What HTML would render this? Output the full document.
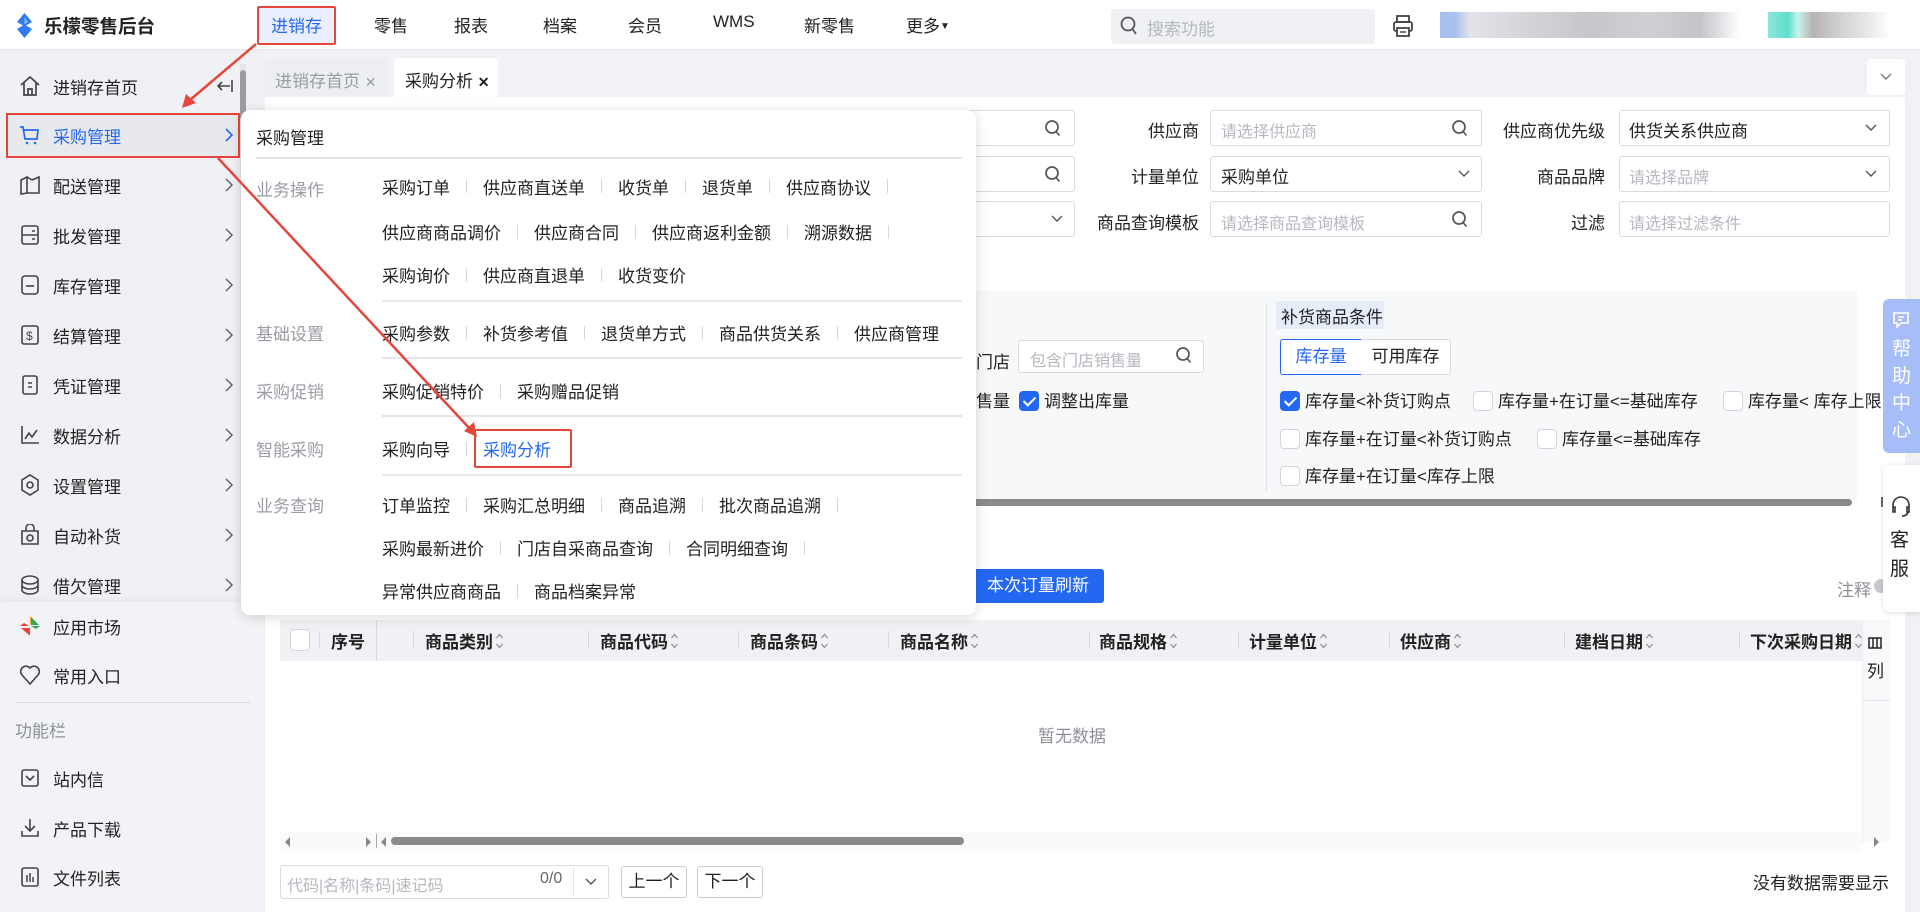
<!DOCTYPE html>
<html><head><meta charset="utf-8">
<style>
*{box-sizing:border-box;margin:0;padding:0}
body{width:1920px;height:912px;overflow:hidden;position:relative;background:#f0f2f5;font-family:"Liberation Sans","Noto Sans CJK SC",sans-serif;color:#222;font-size:17px}
.a{position:absolute;white-space:nowrap}
.hdr{left:0;top:0;width:1920px;height:50px;background:#fff;border-bottom:1px solid #e3e5ea}
.nav{top:12px;font-size:17px;color:#222}
.side{left:0;top:51px;width:264px;height:861px;background:#f0f1f4}
.si{left:0;width:264px;height:50px;display:flex;align-items:center}
.si svg{margin-left:19px;margin-right:12px;flex:none}
.si .chev{position:absolute;left:205px;top:17px}
.inp{background:#fff;border:1px solid #d9dbe0;border-radius:3px;height:36px}
.ph{color:#b5b8bf;font-size:16px}
.lbl{font-size:17px;color:#222}
.pop{left:241px;top:110px;width:735px;height:505px;background:#fff;border-radius:9px;box-shadow:0 2px 12px rgba(0,0,0,.15)}
.row{position:absolute;left:141px;display:flex;align-items:center;font-size:17px;color:#222}
.sep{display:inline-block;width:1px;height:14px;background:#d5d7dc;margin:0 16px}
.sl{position:absolute;left:15px;font-size:17px;color:#9a9da4}
.dv{position:absolute;left:141px;width:580px;height:1.5px;background:#e6e7ea}
.cb{display:inline-block;width:20px;height:20px;border:1px solid #d3d6dc;border-radius:4px;background:#fff;vertical-align:-4px;margin-right:5px}
.cbk{background:#2468f2;border-color:#2468f2;position:relative}
.cbk:after{content:"";position:absolute;left:6px;top:2px;width:5px;height:10px;border:solid #fff;border-width:0 2px 2px 0;transform:rotate(45deg)}
.th{top:620px;height:41px;font-size:17px;font-weight:bold;color:#222;display:flex;align-items:center}
.srt{display:inline-block;width:9px;height:18px;margin-left:2px;vertical-align:middle}
.thd{top:631px;width:1px;height:18px;background:#d5d7dc}
</style></head><body>

<div class="a hdr"></div>
<svg class="a" style="left:16px;top:13px" width="17" height="25" viewBox="0 0 17 25"><path d="M8.5 0 L16 9 L10 12.5 L16 16 L8.5 25 L1 16 L7 12.5 L1 9 Z" fill="#2f7bf5"/><path d="M8.5 4 L12 9 L8.5 11 Z" fill="#8fc0ff"/></svg>
<div class="a" style="left:44px;top:13px;font-size:18.5px;font-weight:bold;color:#222">乐檬零售后台</div>
<div class="a" style="left:257px;top:6px;width:79px;height:39px;border:2.5px solid #e5463b;border-radius:2px;background:#e9efff"></div>
<div class="a nav" style="left:271px;color:#2468f2">进销存</div>
<div class="a nav" style="left:374px">零售</div>
<div class="a nav" style="left:454px">报表</div>
<div class="a nav" style="left:543px">档案</div>
<div class="a nav" style="left:628px">会员</div>
<div class="a nav" style="left:713px">WMS</div>
<div class="a nav" style="left:804px">新零售</div>
<div class="a nav" style="left:906px">更多<span style="font-size:10px;vertical-align:3px">▼</span></div>
<div class="a" style="left:1111px;top:9px;width:264px;height:35px;background:#f0f1f4;border-radius:4px"></div>
<svg class="a" style="left:1120px;top:16px" width="18" height="20" viewBox="0 0 18 20"><circle cx="8" cy="8" r="6.5" fill="none" stroke="#555" stroke-width="1.8"/><path d="M12.5 13 L16 18" stroke="#555" stroke-width="1.8"/></svg>
<div class="a ph" style="left:1147px;top:15px;font-size:17px">搜索功能</div>
<svg class="a" style="left:1392px;top:14px" width="22" height="24" viewBox="0 0 22 24"><rect x="5" y="2" width="12" height="6" fill="none" stroke="#444" stroke-width="1.8"/><rect x="2" y="8" width="18" height="9" rx="2" fill="none" stroke="#444" stroke-width="1.8"/><rect x="5" y="14" width="12" height="8" fill="#fff" stroke="#444" stroke-width="1.8"/><line x1="8" y1="18" x2="14" y2="18" stroke="#444" stroke-width="1.5"/></svg>
<div class="a" style="left:1440px;top:12px;width:300px;height:26px;background:linear-gradient(90deg,#a8c0f0 0,#a8c0f0 15px,#e2e4ea 30px,#d4d4d8 90px,#c6c6cb 150px,#d0d0d4 210px,#c2c4c8 260px,#fff 300px)"></div>
<div class="a" style="left:1768px;top:12px;width:122px;height:26px;background:linear-gradient(90deg,#8de5d8 0,#5ee0cf 20px,#c8f2ec 30px,#b6b4b4 45px,#cfcfd2 70px,#e8e8ea 100px,#fff 122px)"></div>

<div class="a side"></div>
<div class="a" style="left:240px;top:64px;width:6px;height:520px;background:#e4e6ea"></div>
<div class="a" style="left:240px;top:70px;width:6px;height:50px;background:#9a9ca2;border-radius:3px"></div>
<div class="a" style="left:0;top:602px;width:264px;height:310px;background:#f2f3f6;box-shadow:0 -3px 6px rgba(0,0,0,.04)"></div>

<div class="a si" style="top:61px"><svg width="22" height="22" viewBox="0 0 22 22"><path d="M2 10 L11 2 L20 10 M5 8 V20 H17 V8 M9 20 V14 H13 V20" fill="none" stroke="#444" stroke-width="1.7"/></svg>进销存首页</div>
<svg class="a" style="left:216px;top:78px" width="18" height="16" viewBox="0 0 18 16"><path d="M2 8 H14 M6 4 L2 8 L6 12 M16 2 V14" fill="none" stroke="#444" stroke-width="1.6"/></svg>

<div class="a" style="left:6px;top:113px;width:234px;height:45px;background:#e7e9ee;border:2.5px solid #e5463b"></div>
<div class="a si" style="top:110px;color:#2468f2"><svg width="22" height="22" viewBox="0 0 22 22"><path d="M1 3 H4 L6 15 H18 L19 6 H5" fill="none" stroke="#2468f2" stroke-width="1.7"/><circle cx="8" cy="19" r="1.3" fill="#2468f2"/><circle cx="16" cy="19" r="1.3" fill="#2468f2"/></svg>采购管理<svg class="chev" width="10" height="16" viewBox="0 0 10 16"><path d="M2 2 L8 8 L2 14" fill="none" stroke="#2468f2" stroke-width="1.6"/></svg></div>

<div class="a si" style="top:160px"><svg width="22" height="22" viewBox="0 0 22 22"><path d="M2 6 L8 3 V19 L2 20 Z M8 3 L13 6 M13 6 L20 3 V19 L8 19" fill="none" stroke="#444" stroke-width="1.6"/></svg>配送管理<svg class="chev" width="10" height="16" viewBox="0 0 10 16"><path d="M2 2 L8 8 L2 14" fill="none" stroke="#666" stroke-width="1.5"/></svg></div>
<div class="a si" style="top:210px"><svg width="22" height="22" viewBox="0 0 22 22"><rect x="3" y="2" width="16" height="18" rx="2" fill="none" stroke="#444" stroke-width="1.6"/><path d="M3 11 H19 M13 7 H16 M13 15 H16" stroke="#444" stroke-width="1.6"/></svg>批发管理<svg class="chev" width="10" height="16" viewBox="0 0 10 16"><path d="M2 2 L8 8 L2 14" fill="none" stroke="#666" stroke-width="1.5"/></svg></div>
<div class="a si" style="top:260px"><svg width="22" height="22" viewBox="0 0 22 22"><rect x="3" y="2" width="16" height="18" rx="3" fill="none" stroke="#444" stroke-width="1.6"/><path d="M7 12 H15" stroke="#444" stroke-width="1.6"/></svg>库存管理<svg class="chev" width="10" height="16" viewBox="0 0 10 16"><path d="M2 2 L8 8 L2 14" fill="none" stroke="#666" stroke-width="1.5"/></svg></div>
<div class="a si" style="top:310px"><svg width="22" height="22" viewBox="0 0 22 22"><rect x="3" y="2" width="16" height="18" rx="2" fill="none" stroke="#444" stroke-width="1.6"/><text x="7" y="16" font-size="12" fill="#444" font-family="Liberation Sans">$</text></svg>结算管理<svg class="chev" width="10" height="16" viewBox="0 0 10 16"><path d="M2 2 L8 8 L2 14" fill="none" stroke="#666" stroke-width="1.5"/></svg></div>
<div class="a si" style="top:360px"><svg width="22" height="22" viewBox="0 0 22 22"><rect x="4" y="2" width="14" height="18" rx="2" fill="none" stroke="#444" stroke-width="1.6"/><path d="M9 9 H13 M9 13 H13" stroke="#444" stroke-width="1.6"/></svg>凭证管理<svg class="chev" width="10" height="16" viewBox="0 0 10 16"><path d="M2 2 L8 8 L2 14" fill="none" stroke="#666" stroke-width="1.5"/></svg></div>
<div class="a si" style="top:410px"><svg width="22" height="22" viewBox="0 0 22 22"><path d="M3 2 V19 H20 M6 15 L10 9 L13 13 L18 6" fill="none" stroke="#444" stroke-width="1.6"/></svg>数据分析<svg class="chev" width="10" height="16" viewBox="0 0 10 16"><path d="M2 2 L8 8 L2 14" fill="none" stroke="#666" stroke-width="1.5"/></svg></div>
<div class="a si" style="top:460px"><svg width="22" height="22" viewBox="0 0 22 22"><path d="M11 1 L19 6 V16 L11 21 L3 16 V6 Z" fill="none" stroke="#444" stroke-width="1.6"/><circle cx="11" cy="11" r="3" fill="none" stroke="#444" stroke-width="1.6"/></svg>设置管理<svg class="chev" width="10" height="16" viewBox="0 0 10 16"><path d="M2 2 L8 8 L2 14" fill="none" stroke="#666" stroke-width="1.5"/></svg></div>
<div class="a si" style="top:510px"><svg width="22" height="22" viewBox="0 0 22 22"><path d="M7 7 V4 A4 4 0 0 1 15 4 V7 M3 7 H19 V20 H3 Z" fill="none" stroke="#444" stroke-width="1.6"/><circle cx="11" cy="14" r="3" fill="none" stroke="#444" stroke-width="1.6"/></svg>自动补货<svg class="chev" width="10" height="16" viewBox="0 0 10 16"><path d="M2 2 L8 8 L2 14" fill="none" stroke="#666" stroke-width="1.5"/></svg></div>
<div class="a si" style="top:560px"><svg width="22" height="22" viewBox="0 0 22 22"><ellipse cx="11" cy="6" rx="8" ry="4" fill="none" stroke="#444" stroke-width="1.6"/><path d="M3 6 V16 A8 4 0 0 0 19 16 V6 M3 11 A8 4 0 0 0 19 11" fill="none" stroke="#444" stroke-width="1.6"/></svg>借欠管理<svg class="chev" width="10" height="16" viewBox="0 0 10 16"><path d="M2 2 L8 8 L2 14" fill="none" stroke="#666" stroke-width="1.5"/></svg></div>

<div class="a si" style="top:601px"><svg width="22" height="22" viewBox="0 0 22 22"><path d="M11 1 L14 5 L11 10 Z" fill="#f5a623"/><path d="M21 11 L17 14 L12 11 Z" fill="#34a853"/><path d="M11 21 L8 17 L11 12 Z" fill="#4285f4"/><path d="M1 11 L5 8 L10 11 Z" fill="#ea4335"/><path d="M2 13 H10 V20 Z" fill="#ea4335"/><path d="M12 2 L20 10 H12 Z" fill="#34a853"/></svg>应用市场</div>
<div class="a si" style="top:650px"><svg width="22" height="22" viewBox="0 0 22 22"><path d="M11 20 L3 11 A5 5 0 0 1 11 4 A5 5 0 0 1 19 11 Z" fill="none" stroke="#444" stroke-width="1.6"/></svg>常用入口</div>
<div class="a" style="left:15px;top:702px;width:235px;height:1px;background:#d8dadf"></div>
<div class="a" style="left:15px;top:717px;font-size:17px;color:#8d9097">功能栏</div>
<div class="a si" style="top:753px"><svg width="22" height="22" viewBox="0 0 22 22"><rect x="3" y="3" width="16" height="16" rx="2" fill="none" stroke="#444" stroke-width="1.6"/><path d="M7 9 L11 13 L15 9" fill="none" stroke="#444" stroke-width="1.6"/></svg>站内信</div>
<div class="a si" style="top:803px"><svg width="22" height="22" viewBox="0 0 22 22"><path d="M11 2 V14 M6 9 L11 14 L16 9 M3 14 V19 H19 V14" fill="none" stroke="#444" stroke-width="1.6"/></svg>产品下载</div>
<div class="a si" style="top:852px"><svg width="22" height="22" viewBox="0 0 22 22"><rect x="3" y="2" width="16" height="18" rx="2" fill="none" stroke="#444" stroke-width="1.6"/><path d="M8 9 V16 M11 7 V16 M14 11 V16" stroke="#444" stroke-width="1.5"/></svg>文件列表</div>

<div class="a" style="left:265px;top:58px;width:123px;height:38px;background:#eceef2;border-radius:4px 4px 0 0"></div>
<div class="a" style="left:275px;top:67px;font-size:17px;color:#9a9da4">进销存首页 <span style="font-size:14px">✕</span></div>
<div class="a" style="left:394px;top:58px;width:104px;height:40px;background:#fff;border-radius:4px 4px 0 0"></div>
<div class="a" style="left:405px;top:67px;font-size:17px;color:#222">采购分析 <span style="font-size:14px;font-weight:bold">✕</span></div>
<div class="a" style="left:1867px;top:59px;width:38px;height:36px;background:#fff;border-radius:4px"></div>
<svg class="a" style="left:1879px;top:72px" width="14" height="10" viewBox="0 0 14 10"><path d="M2 2 L7 7 L12 2" fill="none" stroke="#777" stroke-width="1.4"/></svg>

<div class="a" style="left:265px;top:97px;width:1640px;height:815px;background:#fff"></div>

<div class="a inp" style="left:900px;top:110px;width:175px"></div>
<div class="a inp" style="left:900px;top:156px;width:175px"></div>
<div class="a inp" style="left:900px;top:201px;width:175px"></div>
<svg class="a" style="left:1044px;top:119px" width="18" height="20" viewBox="0 0 18 20"><circle cx="8" cy="8" r="6" fill="none" stroke="#555" stroke-width="1.7"/><path d="M12 12.5 L15.5 16.5" stroke="#555" stroke-width="1.7"/></svg>
<svg class="a" style="left:1044px;top:165px" width="18" height="20" viewBox="0 0 18 20"><circle cx="8" cy="8" r="6" fill="none" stroke="#555" stroke-width="1.7"/><path d="M12 12.5 L15.5 16.5" stroke="#555" stroke-width="1.7"/></svg>
<svg class="a" style="left:1050px;top:214px" width="14" height="10" viewBox="0 0 14 10"><path d="M2 2 L7 7 L12 2" fill="none" stroke="#555" stroke-width="1.4"/></svg>

<div class="a lbl" style="left:1148px;top:117px">供应商</div>
<div class="a inp" style="left:1210px;top:110px;width:272px"></div>
<div class="a ph" style="left:1221px;top:118px">请选择供应商</div>
<svg class="a" style="left:1451px;top:119px" width="18" height="20" viewBox="0 0 18 20"><circle cx="8" cy="8" r="6" fill="none" stroke="#555" stroke-width="1.7"/><path d="M12 12.5 L15.5 16.5" stroke="#555" stroke-width="1.7"/></svg>
<div class="a lbl" style="left:1131px;top:163px">计量单位</div>
<div class="a inp" style="left:1210px;top:156px;width:272px"></div>
<div class="a" style="left:1221px;top:163px;font-size:17px">采购单位</div>
<svg class="a" style="left:1457px;top:169px" width="14" height="10" viewBox="0 0 14 10"><path d="M2 2 L7 7 L12 2" fill="none" stroke="#555" stroke-width="1.4"/></svg>
<div class="a lbl" style="left:1097px;top:209px">商品查询模板</div>
<div class="a inp" style="left:1210px;top:201px;width:272px"></div>
<div class="a ph" style="left:1221px;top:210px">请选择商品查询模板</div>
<svg class="a" style="left:1451px;top:210px" width="18" height="20" viewBox="0 0 18 20"><circle cx="8" cy="8" r="6" fill="none" stroke="#555" stroke-width="1.7"/><path d="M12 12.5 L15.5 16.5" stroke="#555" stroke-width="1.7"/></svg>

<div class="a lbl" style="left:1503px;top:117px">供应商优先级</div>
<div class="a inp" style="left:1619px;top:110px;width:271px"></div>
<div class="a" style="left:1629px;top:117px;font-size:17px">供货关系供应商</div>
<svg class="a" style="left:1864px;top:123px" width="14" height="10" viewBox="0 0 14 10"><path d="M2 2 L7 7 L12 2" fill="none" stroke="#555" stroke-width="1.4"/></svg>
<div class="a lbl" style="left:1537px;top:163px">商品品牌</div>
<div class="a inp" style="left:1619px;top:156px;width:271px"></div>
<div class="a ph" style="left:1629px;top:164px">请选择品牌</div>
<svg class="a" style="left:1864px;top:169px" width="14" height="10" viewBox="0 0 14 10"><path d="M2 2 L7 7 L12 2" fill="none" stroke="#555" stroke-width="1.4"/></svg>
<div class="a lbl" style="left:1571px;top:209px">过滤</div>
<div class="a inp" style="left:1619px;top:201px;width:271px"></div>
<div class="a ph" style="left:1629px;top:210px">请选择过滤条件</div>

<div class="a" style="left:265px;top:291px;width:1592px;height:210px;background:#f7f8fa"></div>
<div class="a" style="left:1266px;top:302px;width:1px;height:190px;background:#e3e5e9"></div>
<div class="a" style="left:1276px;top:301px;width:108px;height:28px;background:#e6ecf8"></div>
<div class="a" style="left:1281px;top:303px;font-size:17px">补货商品条件</div>
<div class="a" style="left:1280px;top:339px;width:82px;height:36px;border:1px solid #2468f2;background:#fff;border-radius:3px 0 0 3px;color:#2468f2;font-size:17px;text-align:center;line-height:34px">库存量</div>
<div class="a" style="left:1361px;top:339px;width:90px;height:36px;border:1px solid #d9dbe0;border-left:none;background:#fff;border-radius:0 3px 3px 0;font-size:17px;text-align:center;line-height:34px">可用库存</div>
<div class="a" style="left:1280px;top:387px;font-size:17px"><span class="cb cbk"></span>库存量&lt;补货订购点</div>
<div class="a" style="left:1473px;top:387px;font-size:17px"><span class="cb"></span>库存量+在订量&lt;=基础库存</div>
<div class="a" style="left:1723px;top:387px;font-size:17px;width:160px;overflow:hidden"><span class="cb"></span>库存量&lt; 库存上限</div>
<div class="a" style="left:1280px;top:425px;font-size:17px"><span class="cb"></span>库存量+在订量&lt;补货订购点</div>
<div class="a" style="left:1537px;top:425px;font-size:17px"><span class="cb"></span>库存量&lt;=基础库存</div>
<div class="a" style="left:1280px;top:462px;font-size:17px"><span class="cb"></span>库存量+在订量&lt;库存上限</div>
<div class="a" style="left:976px;top:348px;font-size:17px">门店</div>
<div class="a inp" style="left:1018px;top:340px;width:186px;height:33px"></div>
<div class="a ph" style="left:1030px;top:347px">包含门店销售量</div>
<svg class="a" style="left:1175px;top:346px" width="18" height="20" viewBox="0 0 18 20"><circle cx="8" cy="8" r="6" fill="none" stroke="#555" stroke-width="1.7"/><path d="M12 12.5 L15.5 16.5" stroke="#555" stroke-width="1.7"/></svg>
<div class="a" style="left:976px;top:387px;font-size:17px">售量</div>
<div class="a" style="left:1019px;top:387px;font-size:17px"><span class="cb cbk"></span>调整出库量</div>
<div class="a" style="left:265px;top:499px;width:1587px;height:7px;background:#8a8a8a;border-radius:4px"></div>
<div class="a" style="left:1881px;top:497px;width:2px;height:10px;background:#666"></div>

<div class="a" style="left:972px;top:569px;width:132px;height:34px;background:#2468f2;border-radius:3px;color:#fff;font-size:17px;text-align:center;line-height:34px">本次订量刷新</div>
<div class="a" style="left:1837px;top:576px;font-size:17px;color:#8d9097">注释</div>
<div class="a" style="left:1874px;top:579px;width:14px;height:14px;border-radius:50%;background:#c8cad0"></div>

<div class="a" style="left:1883px;top:299px;width:37px;height:154px;background:#a7bdf7;border-radius:6px 0 0 6px"></div>
<svg class="a" style="left:1892px;top:311px" width="18" height="18" viewBox="0 0 18 18"><path d="M2 2 H16 V12 H9 L5 16 V12 H2 Z" fill="none" stroke="#fff" stroke-width="1.6"/><path d="M6 6 H12 M6 9 H10" stroke="#fff" stroke-width="1.4"/></svg>
<div class="a" style="left:1892px;top:336px;width:20px;font-size:19px;color:#fff;line-height:27px;white-space:normal">帮助中心</div>
<div class="a" style="left:1883px;top:465px;width:37px;height:147px;background:#fff;border-radius:6px 0 0 6px;box-shadow:0 1px 6px rgba(0,0,0,.12)"></div>
<svg class="a" style="left:1890px;top:495px" width="22" height="24" viewBox="0 0 22 24"><path d="M3 13 V10 A8 8 0 0 1 19 10 V13 M3 12 H5 V17 H3 Z M17 12 H19 V17 H17 Z M18 17 Q17 21 12 21" fill="none" stroke="#333" stroke-width="1.6"/></svg>
<div class="a" style="left:1890px;top:526px;width:20px;font-size:19px;color:#222;line-height:29px;white-space:normal">客服</div>

<div class="a" style="left:280px;top:620px;width:1582px;height:41px;background:#f0f1f4"></div>
<div class="a" style="left:1862px;top:620px;width:28px;height:222px;background:#f8f9fa;border-left:1px solid #eceef1"></div>
<div class="a" style="left:1862px;top:700px;width:28px;height:1px;background:#e3e5e9"></div>
<div class="a" style="left:376px;top:620px;width:1px;height:41px;background:#d5d7dc"></div>
<span class="a cb" style="left:290px;top:629px;width:20px;height:22px"></span>
<div class="a thd" style="left:319px"></div>
<div class="a th" style="left:331px">序号</div>
<div class="a thd" style="left:413px"></div><div class="a th" style="left:425px">商品类别<svg class="srt" viewBox="0 0 9 18"><path d="M1.5 6 L4.5 2.5 L7.5 6 M1.5 12 L4.5 15.5 L7.5 12" fill="none" stroke="#888" stroke-width="1.1"/></svg></div>
<div class="a thd" style="left:588px"></div><div class="a th" style="left:600px">商品代码<svg class="srt" viewBox="0 0 9 18"><path d="M1.5 6 L4.5 2.5 L7.5 6 M1.5 12 L4.5 15.5 L7.5 12" fill="none" stroke="#888" stroke-width="1.1"/></svg></div>
<div class="a thd" style="left:738px"></div><div class="a th" style="left:750px">商品条码<svg class="srt" viewBox="0 0 9 18"><path d="M1.5 6 L4.5 2.5 L7.5 6 M1.5 12 L4.5 15.5 L7.5 12" fill="none" stroke="#888" stroke-width="1.1"/></svg></div>
<div class="a thd" style="left:888px"></div><div class="a th" style="left:900px">商品名称<svg class="srt" viewBox="0 0 9 18"><path d="M1.5 6 L4.5 2.5 L7.5 6 M1.5 12 L4.5 15.5 L7.5 12" fill="none" stroke="#888" stroke-width="1.1"/></svg></div>
<div class="a thd" style="left:1089px"></div><div class="a th" style="left:1099px">商品规格<svg class="srt" viewBox="0 0 9 18"><path d="M1.5 6 L4.5 2.5 L7.5 6 M1.5 12 L4.5 15.5 L7.5 12" fill="none" stroke="#888" stroke-width="1.1"/></svg></div>
<div class="a thd" style="left:1238px"></div><div class="a th" style="left:1249px">计量单位<svg class="srt" viewBox="0 0 9 18"><path d="M1.5 6 L4.5 2.5 L7.5 6 M1.5 12 L4.5 15.5 L7.5 12" fill="none" stroke="#888" stroke-width="1.1"/></svg></div>
<div class="a thd" style="left:1389px"></div><div class="a th" style="left:1400px">供应商<svg class="srt" viewBox="0 0 9 18"><path d="M1.5 6 L4.5 2.5 L7.5 6 M1.5 12 L4.5 15.5 L7.5 12" fill="none" stroke="#888" stroke-width="1.1"/></svg></div>
<div class="a thd" style="left:1564px"></div><div class="a th" style="left:1575px">建档日期<svg class="srt" viewBox="0 0 9 18"><path d="M1.5 6 L4.5 2.5 L7.5 6 M1.5 12 L4.5 15.5 L7.5 12" fill="none" stroke="#888" stroke-width="1.1"/></svg></div>
<div class="a thd" style="left:1739px"></div><div class="a th" style="left:1750px">下次采购日期<svg class="srt" viewBox="0 0 9 18"><path d="M1.5 6 L4.5 2.5 L7.5 6 M1.5 12 L4.5 15.5 L7.5 12" fill="none" stroke="#888" stroke-width="1.1"/></svg></div>
<svg class="a" style="left:1868px;top:636px" width="14" height="14" viewBox="0 0 14 14"><rect x="1" y="2" width="12" height="10" fill="none" stroke="#222" stroke-width="1.5"/><path d="M5 2 V12 M9 2 V12" stroke="#222" stroke-width="1.5"/></svg>
<div class="a" style="left:1867px;top:657px;font-size:17px">列</div>
<div class="a" style="left:1038px;top:722px;font-size:17px;color:#8d9097">暂无数据</div>
<div class="a" style="left:280px;top:832px;width:1582px;height:20px;background:#fafafa"></div>
<div class="a" style="left:285px;top:837px;width:0;height:0;border:5px solid transparent;border-right:5px solid #888;border-left:none"></div>
<div class="a" style="left:366px;top:837px;width:0;height:0;border:5px solid transparent;border-left:5px solid #888;border-right:none"></div>
<div class="a" style="left:376px;top:834px;width:1px;height:14px;background:#aaa"></div>
<div class="a" style="left:381px;top:837px;width:0;height:0;border:5px solid transparent;border-right:5px solid #888;border-left:none"></div>
<div class="a" style="left:391px;top:837px;width:573px;height:8px;background:#8a8a8a;border-radius:4px"></div>
<div class="a" style="left:1874px;top:837px;width:0;height:0;border:5px solid transparent;border-left:5px solid #888;border-right:none"></div>

<div class="a inp" style="left:280px;top:865px;width:329px;height:34px"></div>
<div class="a ph" style="left:287px;top:872px">代码|名称|条码|速记码</div>
<div class="a" style="left:540px;top:870px;font-size:16px;color:#666">0/0</div>
<div class="a" style="left:573px;top:868px;width:1px;height:28px;background:#e3e5e9"></div>
<svg class="a" style="left:584px;top:877px" width="14" height="10" viewBox="0 0 14 10"><path d="M2 2 L7 7 L12 2" fill="none" stroke="#555" stroke-width="1.4"/></svg>
<div class="a" style="left:621px;top:866px;width:66px;height:32px;border:1px solid #ccc;border-radius:3px;background:#fff;text-align:center;line-height:30px;font-size:17px">上一个</div>
<div class="a" style="left:697px;top:866px;width:66px;height:32px;border:1px solid #ccc;border-radius:3px;background:#fff;text-align:center;line-height:30px;font-size:17px">下一个</div>
<div class="a" style="left:1753px;top:869px;font-size:17px">没有数据需要显示</div>

<div class="a pop">
  <div class="a" style="left:15px;top:14px;font-size:17px;color:#222">采购管理</div>
  <div class="a" style="left:15px;top:47px;width:706px;height:1.5px;background:#e2e3e7"></div>
  <div class="sl" style="top:66px">业务操作</div>
  <div class="row" style="top:33px;height:20px;margin-top:33px">采购订单<span class="sep"></span>供应商直送单<span class="sep"></span>收货单<span class="sep"></span>退货单<span class="sep"></span>供应商协议<span class="sep"></span></div>
  <div class="row" style="top:109px">供应商商品调价<span class="sep"></span>供应商合同<span class="sep"></span>供应商返利金额<span class="sep"></span>溯源数据<span class="sep"></span></div>
  <div class="row" style="top:152px">采购询价<span class="sep"></span>供应商直退单<span class="sep"></span>收货变价</div>
  <div class="dv" style="top:190px"></div>
  <div class="sl" style="top:210px">基础设置</div>
  <div class="row" style="top:210px">采购参数<span class="sep"></span>补货参考值<span class="sep"></span>退货单方式<span class="sep"></span>商品供货关系<span class="sep"></span>供应商管理</div>
  <div class="dv" style="top:247px"></div>
  <div class="sl" style="top:268px">采购促销</div>
  <div class="row" style="top:268px">采购促销特价<span class="sep"></span>采购赠品促销</div>
  <div class="dv" style="top:305px"></div>
  <div class="sl" style="top:326px">智能采购</div>
  <div class="row" style="top:326px">采购向导<span class="sep"></span><span style="color:#2468f2">采购分析</span></div>
  <div class="a" style="left:233px;top:319px;width:98px;height:39px;border:2.5px solid #e5463b;border-radius:2px"></div>
  <div class="dv" style="top:364px"></div>
  <div class="sl" style="top:382px">业务查询</div>
  <div class="row" style="top:382px">订单监控<span class="sep"></span>采购汇总明细<span class="sep"></span>商品追溯<span class="sep"></span>批次商品追溯<span class="sep"></span></div>
  <div class="row" style="top:425px">采购最新进价<span class="sep"></span>门店自采商品查询<span class="sep"></span>合同明细查询<span class="sep"></span></div>
  <div class="row" style="top:468px">异常供应商商品<span class="sep"></span>商品档案异常</div>
</div>

<svg class="a" style="left:0;top:0" width="1920" height="912" viewBox="0 0 1920 912">
  <line x1="256" y1="44" x2="190" y2="100" stroke="#e5463b" stroke-width="2.5"/>
  <path d="M182 108 L186 94 L196 103 Z" fill="#e5463b"/>
  <line x1="218" y1="158" x2="471" y2="430" stroke="#e5463b" stroke-width="2.5"/>
  <path d="M477 437 L464 431 L474 422 Z" fill="#e5463b"/>
</svg>
</body></html>
